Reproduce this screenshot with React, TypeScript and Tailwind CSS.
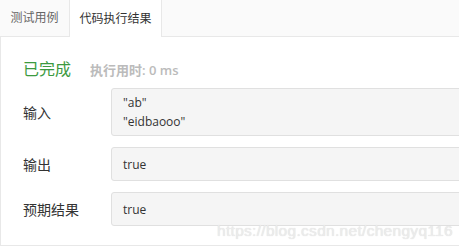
const rows = [
  { label: "输入", lines: ['"ab"', '"eidbaooo"'] },
  { label: "输出", lines: ["true"] },
  { label: "预期结果", lines: ["true"] },
];

export default function App() {
  return (
    <div
      className="relative w-[459px] h-[247px] overflow-hidden bg-white text-[#333]"
      style={{ fontFamily: '"Open Sans", "Noto Sans CJK SC", sans-serif' }}
    >
      {/* tabs */}
      <div className="flex h-[37px] bg-[#fafafa] border-b border-[#e8e8e8]">
        <div className="w-[69px] flex items-center justify-center text-[12px] text-[#666]">测试用例</div>
        <div className="w-[93px] -mb-px flex items-center justify-center text-[12px] text-[#333] bg-white border-x border-[#e8e8e8]">
          代码执行结果
        </div>
      </div>

      <div className="w-[520px] h-[209px] border-l border-b border-[#e8e8e8] pl-[22px] pt-[20px]">
        <div className="flex items-baseline gap-[19px]">
          <span className="text-[16px] text-[#3c9a40]">已完成</span>
          <span className="text-[13px] font-semibold text-[#bbb]">执行用时: 0 ms</span>
        </div>

        <div className="mt-[7px] flex flex-col gap-[11px]">
          {rows.map((r) => (
            <div key={r.label} className="flex items-center">
              <div className="w-[88px] text-[14px] text-[#333]">{r.label}</div>
              <div className="flex-1 min-h-[34px] flex flex-col justify-center rounded-[3px] border border-[#e0e0e0] bg-[#f5f5f5] px-[11px] py-[4px] text-[12px] leading-[19px] text-[#333]">
                {r.lines.map((l) => (
                  <div key={l}>{l}</div>
                ))}
              </div>
            </div>
          ))}
        </div>
      </div>

      <div
        className="absolute left-[217px] top-[219px] text-[15.5px] text-[#ececec] tracking-[0.3px]"
        style={{ fontFamily: '"Liberation Sans", Arial, sans-serif', textShadow: "0 0 1px #d8d8d8" }}
      >
        https://blog.csdn.net/chengyq116
      </div>
    </div>
  );
}
